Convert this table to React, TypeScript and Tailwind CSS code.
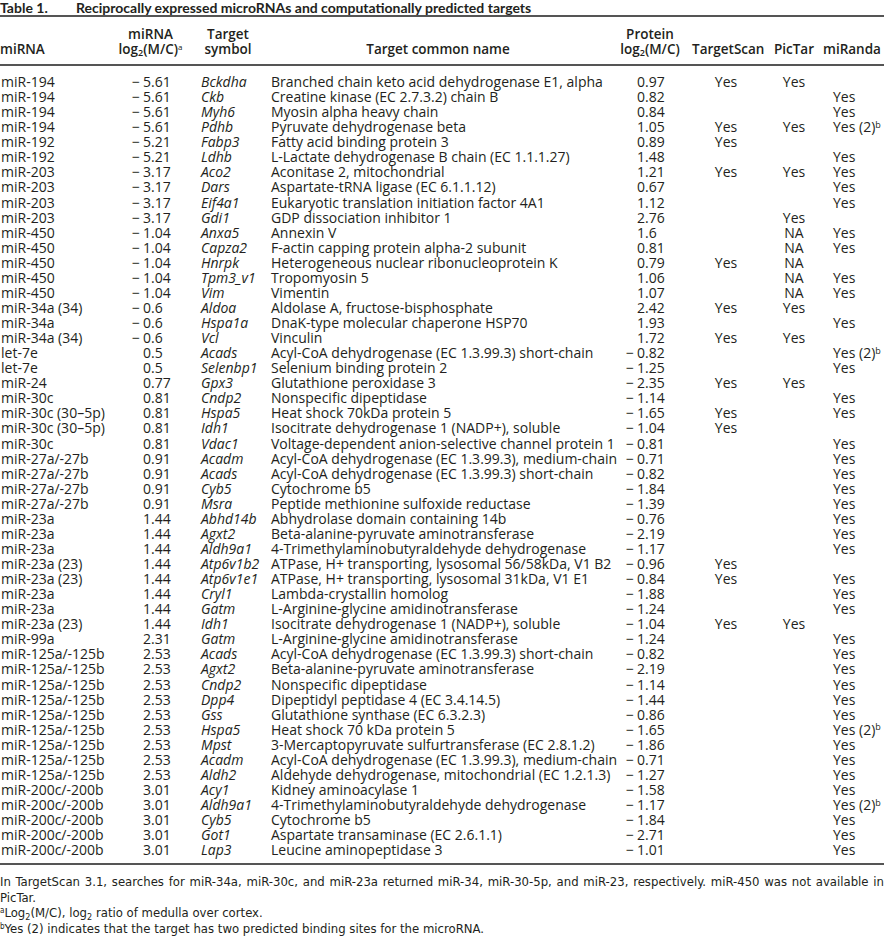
import React from "react";

type Row = [string, string, string, string, string, string, string, string];

const rows: Row[] = [
  ["miR-194", "−5.61", "Bckdha", "Branched chain keto acid dehydrogenase E1, alpha", "0.97", "Yes", "Yes", ""],
  ["miR-194", "−5.61", "Ckb", "Creatine kinase (EC 2.7.3.2) chain B", "0.82", "", "", "Yes"],
  ["miR-194", "−5.61", "Myh6", "Myosin alpha heavy chain", "0.84", "", "", "Yes"],
  ["miR-194", "−5.61", "Pdhb", "Pyruvate dehydrogenase beta", "1.05", "Yes", "Yes", "Y2"],
  ["miR-192", "−5.21", "Fabp3", "Fatty acid binding protein 3", "0.89", "Yes", "", ""],
  ["miR-192", "−5.21", "Ldhb", "L-Lactate dehydrogenase B chain (EC 1.1.1.27)", "1.48", "", "", "Yes"],
  ["miR-203", "−3.17", "Aco2", "Aconitase 2, mitochondrial", "1.21", "Yes", "Yes", "Yes"],
  ["miR-203", "−3.17", "Dars", "Aspartate-tRNA ligase (EC 6.1.1.12)", "0.67", "", "", "Yes"],
  ["miR-203", "−3.17", "Eif4a1", "Eukaryotic translation initiation factor 4A1", "1.12", "", "", "Yes"],
  ["miR-203", "−3.17", "Gdi1", "GDP dissociation inhibitor 1", "2.76", "", "Yes", ""],
  ["miR-450", "−1.04", "Anxa5", "Annexin V", "1.6", "", "NA", "Yes"],
  ["miR-450", "−1.04", "Capza2", "F-actin capping protein alpha-2 subunit", "0.81", "", "NA", "Yes"],
  ["miR-450", "−1.04", "Hnrpk", "Heterogeneous nuclear ribonucleoprotein K", "0.79", "Yes", "NA", ""],
  ["miR-450", "−1.04", "Tpm3_v1", "Tropomyosin 5", "1.06", "", "NA", "Yes"],
  ["miR-450", "−1.04", "Vim", "Vimentin", "1.07", "", "NA", "Yes"],
  ["miR-34a (34)", "−0.6", "Aldoa", "Aldolase A, fructose-bisphosphate", "2.42", "Yes", "Yes", ""],
  ["miR-34a", "−0.6", "Hspa1a", "DnaK-type molecular chaperone HSP70", "1.93", "", "", "Yes"],
  ["miR-34a (34)", "−0.6", "Vcl", "Vinculin", "1.72", "Yes", "Yes", ""],
  ["let-7e", "0.5", "Acads", "Acyl-CoA dehydrogenase (EC 1.3.99.3) short-chain", "−0.82", "", "", "Y2"],
  ["let-7e", "0.5", "Selenbp1", "Selenium binding protein 2", "−1.25", "", "", "Yes"],
  ["miR-24", "0.77", "Gpx3", "Glutathione peroxidase 3", "−2.35", "Yes", "Yes", ""],
  ["miR-30c", "0.81", "Cndp2", "Nonspecific dipeptidase", "−1.14", "", "", "Yes"],
  ["miR-30c (30–5p)", "0.81", "Hspa5", "Heat shock 70kDa protein 5", "−1.65", "Yes", "", "Yes"],
  ["miR-30c (30–5p)", "0.81", "Idh1", "Isocitrate dehydrogenase 1 (NADP+), soluble", "−1.04", "Yes", "", ""],
  ["miR-30c", "0.81", "Vdac1", "Voltage-dependent anion-selective channel protein 1", "−0.81", "", "", "Yes"],
  ["miR-27a/-27b", "0.91", "Acadm", "Acyl-CoA dehydrogenase (EC 1.3.99.3), medium-chain", "−0.71", "", "", "Yes"],
  ["miR-27a/-27b", "0.91", "Acads", "Acyl-CoA dehydrogenase (EC 1.3.99.3) short-chain", "−0.82", "", "", "Yes"],
  ["miR-27a/-27b", "0.91", "Cyb5", "Cytochrome b5", "−1.84", "", "", "Yes"],
  ["miR-27a/-27b", "0.91", "Msra", "Peptide methionine sulfoxide reductase", "−1.39", "", "", "Yes"],
  ["miR-23a", "1.44", "Abhd14b", "Abhydrolase domain containing 14b", "−0.76", "", "", "Yes"],
  ["miR-23a", "1.44", "Agxt2", "Beta-alanine-pyruvate aminotransferase", "−2.19", "", "", "Yes"],
  ["miR-23a", "1.44", "Aldh9a1", "4-Trimethylaminobutyraldehyde dehydrogenase", "−1.17", "", "", "Yes"],
  ["miR-23a (23)", "1.44", "Atp6v1b2", "ATPase, H+ transporting, lysosomal 56/58kDa, V1 B2", "−0.96", "Yes", "", ""],
  ["miR-23a (23)", "1.44", "Atp6v1e1", "ATPase, H+ transporting, lysosomal 31kDa, V1 E1", "−0.84", "Yes", "", "Yes"],
  ["miR-23a", "1.44", "Cryl1", "Lambda-crystallin homolog", "−1.88", "", "", "Yes"],
  ["miR-23a", "1.44", "Gatm", "L-Arginine-glycine amidinotransferase", "−1.24", "", "", "Yes"],
  ["miR-23a (23)", "1.44", "Idh1", "Isocitrate dehydrogenase 1 (NADP+), soluble", "−1.04", "Yes", "Yes", ""],
  ["miR-99a", "2.31", "Gatm", "L-Arginine-glycine amidinotransferase", "−1.24", "", "", "Yes"],
  ["miR-125a/-125b", "2.53", "Acads", "Acyl-CoA dehydrogenase (EC 1.3.99.3) short-chain", "−0.82", "", "", "Yes"],
  ["miR-125a/-125b", "2.53", "Agxt2", "Beta-alanine-pyruvate aminotransferase", "−2.19", "", "", "Yes"],
  ["miR-125a/-125b", "2.53", "Cndp2", "Nonspecific dipeptidase", "−1.14", "", "", "Yes"],
  ["miR-125a/-125b", "2.53", "Dpp4", "Dipeptidyl peptidase 4 (EC 3.4.14.5)", "−1.44", "", "", "Yes"],
  ["miR-125a/-125b", "2.53", "Gss", "Glutathione synthase (EC 6.3.2.3)", "−0.86", "", "", "Yes"],
  ["miR-125a/-125b", "2.53", "Hspa5", "Heat shock 70 kDa protein 5", "−1.65", "", "", "Y2"],
  ["miR-125a/-125b", "2.53", "Mpst", "3-Mercaptopyruvate sulfurtransferase (EC 2.8.1.2)", "−1.86", "", "", "Yes"],
  ["miR-125a/-125b", "2.53", "Acadm", "Acyl-CoA dehydrogenase (EC 1.3.99.3), medium-chain", "−0.71", "", "", "Yes"],
  ["miR-125a/-125b", "2.53", "Aldh2", "Aldehyde dehydrogenase, mitochondrial (EC 1.2.1.3)", "−1.27", "", "", "Yes"],
  ["miR-200c/-200b", "3.01", "Acy1", "Kidney aminoacylase 1", "−1.58", "", "", "Yes"],
  ["miR-200c/-200b", "3.01", "Aldh9a1", "4-Trimethylaminobutyraldehyde dehydrogenase", "−1.17", "", "", "Y2"],
  ["miR-200c/-200b", "3.01", "Cyb5", "Cytochrome b5", "−1.84", "", "", "Yes"],
  ["miR-200c/-200b", "3.01", "Got1", "Aspartate transaminase (EC 2.6.1.1)", "−2.71", "", "", "Yes"],
  ["miR-200c/-200b", "3.01", "Lap3", "Leucine aminopeptidase 3", "−1.01", "", "", "Yes"],
];

function Num({ v, intW }: { v: string; intW: string }) {
  const [i, f] = v.split(".");
  const neg = i.startsWith("−");
  const digits = neg ? i.slice(1) : i;
  return (
    <div className="flex">
      <span className={`${intW} shrink-0 text-right whitespace-nowrap`}>
        {neg ? <span className="mr-[3px]">−</span> : null}
        {digits}
      </span>
      <span>.{f}</span>
    </div>
  );
}

const grid = "grid grid-cols-[112px_89px_70px_324px_97px_68px_68px_56px]";

export default function App() {
  return (
    <div
      className="w-[884px] h-[936px] bg-white text-[#231f20] overflow-hidden"
      style={{ fontFamily: "'Open Sans', Lato, sans-serif" }}
    >
      <div
        className="flex text-[14px] font-bold leading-[15px] whitespace-nowrap"
        style={{ fontFamily: "Lato, 'Open Sans', sans-serif" }}
      >
        <span className="w-[76px]">Table 1.</span>
        <span>Reciprocally expressed microRNAs and computationally predicted targets</span>
      </div>
      <div className="h-[2px] bg-[#555]" />
      <div
        className={`${grid} text-[13.5px] font-semibold leading-[15px] pt-[10px] pb-[7px] items-end`}
      >
        <div>miRNA</div>
        <div className="text-center pr-[12px] whitespace-nowrap">
          miRNA
          <br />
          <span>
            log<sub className="text-[9px]">2</sub>(M/C)<sup className="text-[8px] font-normal">a</sup>
          </span>
        </div>
        <div className="text-center pr-[16px]">
          Target
          <br />
          symbol
        </div>
        <div className="text-center pl-[10px]">Target common name</div>
        <div className="text-center pl-[13px] whitespace-nowrap">
          Protein
          <br />
          log<sub className="text-[9px]">2</sub>(M/C)
        </div>
        <div className="text-center whitespace-nowrap">TargetScan</div>
        <div className="text-center">PicTar</div>
        <div className="whitespace-nowrap ml-[-5px]">miRanda</div>
      </div>
      <div className="h-[2px] bg-[#555]" />
      <div className="pt-[8px] pb-[6px] text-[14px] leading-[15.06px]">
        {rows.map((r, idx) => (
          <div key={idx} className={`${grid} whitespace-nowrap`}>
            <div className="pl-[1px]">{r[0]}</div>
            <Num v={r[1]} intW="w-[39px]" />
            <div className="italic">{r[2]}</div>
            <div>{r[3]}</div>
            <Num v={r[4]} intW="w-[50px]" />
            <div className="text-center">{r[5]}</div>
            <div className="text-center">{r[6]}</div>
            <div className="pl-[5px]">
              {r[7] === "Y2" ? (
                <>
                  Yes (2)<sup className="text-[9px]">b</sup>
                </>
              ) : (
                r[7]
              )}
            </div>
          </div>
        ))}
      </div>
      <div className="h-[2px] bg-[#555]" />
      <div
        className="pt-[9px] text-[13px] leading-[15.5px]"
        style={{ fontFamily: "'Liberation Sans Narrow', 'DejaVu Sans Condensed', sans-serif" }}
      >
        <p className="text-justify">
          In TargetScan 3.1, searches for miR-34a, miR-30c, and miR-23a returned miR-34, miR-30-5p, and miR-23, respectively. miR-450 was not available in PicTar.
        </p>
        <p>
          <sup className="text-[8px]">a</sup>Log<sub className="text-[9px]">2</sub>(M/C), log<sub className="text-[9px]">2</sub> ratio of medulla over cortex.
        </p>
        <p>
          <sup className="text-[8px]">b</sup>Yes (2) indicates that the target has two predicted binding sites for the microRNA.
        </p>
      </div>
    </div>
  );
}
